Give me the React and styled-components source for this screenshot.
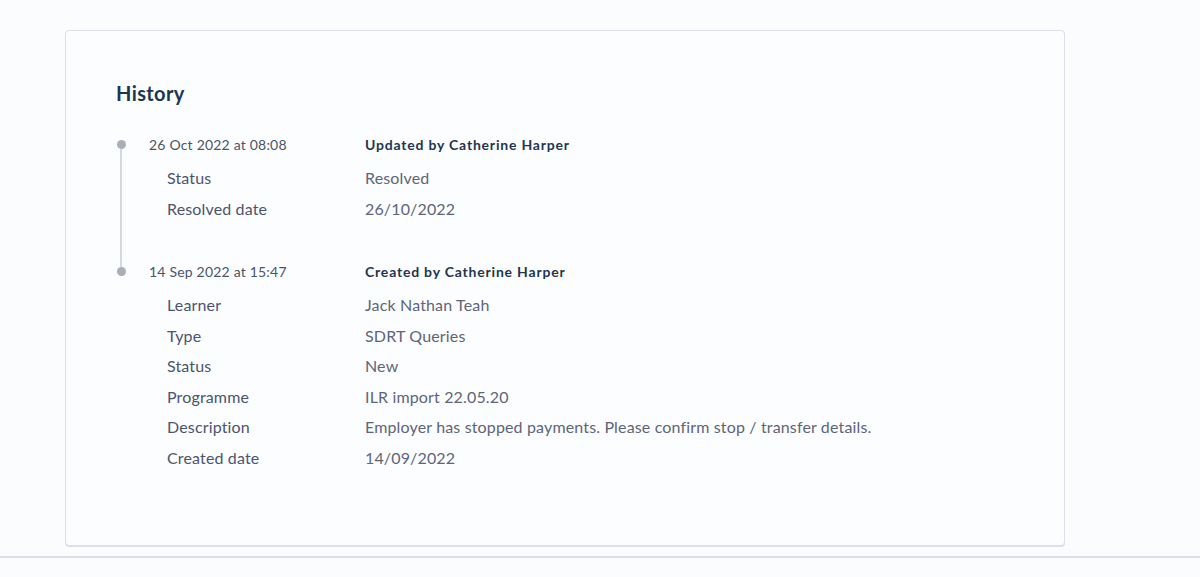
import React from "react";
import styled, { createGlobalStyle } from "styled-components";

const GlobalStyle = createGlobalStyle`
  html, body {
    margin: 0;
    padding: 0;
    background: #fbfcfe;
    font-family: "Lato", "Liberation Sans", sans-serif;
  }
`;

const Page = styled.main`
  min-height: 577px;
  display: flex;
  flex-direction: column;
`;

const Content = styled.div`
  padding: 30px 0 0 65px;
`;

const Card = styled.section`
  width: 1000px;
  box-sizing: border-box;
  background: #fcfdfe;
  border: 1px solid #dcdee8;
  border-radius: 4px;
  box-shadow: 0 1px 0 #dcdee8;
  padding: 50px 50px 72px 50px;
`;

const Title = styled.h2`
  margin: 0 0 30px;
  font-size: 20px;
  line-height: 24px;
  font-weight: 700;
  letter-spacing: 0.4px;
  color: #1c3650;
`;

const Timeline = styled.div`
  display: flex;
  flex-direction: column;
`;

const Entry = styled.div`
  display: grid;
  grid-template-columns: 33px 1fr;
  padding-bottom: ${(p) => (p.last ? "0" : "38px")};
`;

const Rail = styled.div`
  display: flex;
  flex-direction: column;
  align-items: center;
  width: 10px;
  padding-top: 5px;
`;

const Dot = styled.span`
  width: 9px;
  height: 9px;
  border-radius: 50%;
  background: #a9aeb7;
  flex-shrink: 0;
`;

const Line = styled.span`
  flex: 1;
  width: 2px;
  background: #d5d8df;
  margin-bottom: ${(p) => (p.last ? "0" : "-43px")};
  visibility: ${(p) => (p.last ? "hidden" : "visible")};
`;

const Body = styled.div`
  display: flex;
  flex-direction: column;
`;

const Header = styled.div`
  display: grid;
  grid-template-columns: 216px 1fr;
  line-height: 20px;
  margin-bottom: 8px;
`;

const Stamp = styled.span`
  font-size: 14px;
  letter-spacing: 0.2px;
  color: #4a5568;
`;

const Author = styled.span`
  font-size: 14px;
  font-weight: 700;
  letter-spacing: 0.8px;
  color: #1e3650;
`;

const Field = styled.div`
  display: grid;
  grid-template-columns: 216px 1fr;
  line-height: 30.5px;
  font-size: 16px;
  letter-spacing: 0.15px;
`;

const Label = styled.span`
  padding-left: 18px;
  color: #4b5470;
`;

const Value = styled.span`
  color: #5e6579;
`;

const Footer = styled.div`
  margin-top: 10px;
  border-top: 2px solid #dcdfe9;
  flex: 1;
`;

const history = [
  {
    stamp: "26 Oct 2022 at 08:08",
    author: "Updated by Catherine Harper",
    fields: [
      ["Status", "Resolved"],
      ["Resolved date", "26/10/2022"],
    ],
  },
  {
    stamp: "14 Sep 2022 at 15:47",
    author: "Created by Catherine Harper",
    fields: [
      ["Learner", "Jack Nathan Teah"],
      ["Type", "SDRT Queries"],
      ["Status", "New"],
      ["Programme", "ILR import 22.05.20"],
      ["Description", "Employer has stopped payments. Please confirm stop / transfer details."],
      ["Created date", "14/09/2022"],
    ],
  },
];

export default function App() {
  return (
    <Page>
      <GlobalStyle />
      <Content>
        <Card>
          <Title>History</Title>
          <Timeline>
            {history.map((item, i) => {
              const last = i === history.length - 1;
              return (
                <Entry key={item.stamp} last={last}>
                  <Rail>
                    <Dot />
                    <Line last={last} />
                  </Rail>
                  <Body>
                    <Header>
                      <Stamp>{item.stamp}</Stamp>
                      <Author>{item.author}</Author>
                    </Header>
                    {item.fields.map(([label, value]) => (
                      <Field key={label}>
                        <Label>{label}</Label>
                        <Value>{value}</Value>
                      </Field>
                    ))}
                  </Body>
                </Entry>
              );
            })}
          </Timeline>
        </Card>
      </Content>
      <Footer />
    </Page>
  );
}
